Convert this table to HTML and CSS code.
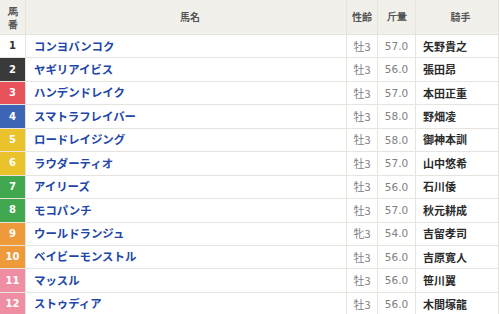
FILE: index.html
```html
<!DOCTYPE html>
<html lang="ja">
<head>
<meta charset="utf-8">
<link rel="stylesheet" href="styles.css">
</head>
<body>
<div class="table">
  <div class="row head">
    <div class="c num">馬<br>番</div>
    <div class="c name">馬名</div>
    <div class="c sex">性齢</div>
    <div class="c wt">斤量</div>
    <div class="c jk">騎手</div>
  </div>
  <div class="row"><div class="c num w1">1</div><div class="c name">コンヨバンコク</div><div class="c sex">牡3</div><div class="c wt">57.0</div><div class="c jk">矢野貴之</div></div>
  <div class="row"><div class="c num w2">2</div><div class="c name">ヤギリアイビス</div><div class="c sex">牡3</div><div class="c wt">56.0</div><div class="c jk">張田昂</div></div>
  <div class="row"><div class="c num w3">3</div><div class="c name">ハンデンドレイク</div><div class="c sex">牡3</div><div class="c wt">57.0</div><div class="c jk">本田正重</div></div>
  <div class="row"><div class="c num w4">4</div><div class="c name">スマトラフレイバー</div><div class="c sex">牡3</div><div class="c wt">58.0</div><div class="c jk">野畑凌</div></div>
  <div class="row"><div class="c num w5">5</div><div class="c name">ロードレイジング</div><div class="c sex">牡3</div><div class="c wt">58.0</div><div class="c jk">御神本訓</div></div>
  <div class="row"><div class="c num w5">6</div><div class="c name">ラウダーティオ</div><div class="c sex">牡3</div><div class="c wt">57.0</div><div class="c jk">山中悠希</div></div>
  <div class="row"><div class="c num w7">7</div><div class="c name">アイリーズ</div><div class="c sex">牡3</div><div class="c wt">56.0</div><div class="c jk">石川倭</div></div>
  <div class="row"><div class="c num w7">8</div><div class="c name">モコパンチ</div><div class="c sex">牡3</div><div class="c wt">57.0</div><div class="c jk">秋元耕成</div></div>
  <div class="row"><div class="c num w9">9</div><div class="c name">ウールドランジュ</div><div class="c sex">牝3</div><div class="c wt">54.0</div><div class="c jk">吉留孝司</div></div>
  <div class="row"><div class="c num w9">10</div><div class="c name">ベイビーモンストル</div><div class="c sex">牡3</div><div class="c wt">56.0</div><div class="c jk">吉原寛人</div></div>
  <div class="row"><div class="c num w11">11</div><div class="c name">マッスル</div><div class="c sex">牡3</div><div class="c wt">56.0</div><div class="c jk">笹川翼</div></div>
  <div class="row"><div class="c num w11">12</div><div class="c name">ストゥディア</div><div class="c sex">牡3</div><div class="c wt">56.0</div><div class="c jk">木間塚龍</div></div>
</div>
</body>
</html>
```
FILE: styles.css
```css
html, body {
  margin: 0;
  padding: 0;
  background: #fff;
}
body {
  font-family: "Noto Sans CJK JP", "Noto Sans", sans-serif;
  color: #333;
}
.table {
  width: 499px;
  display: flex;
  flex-direction: column;
}
.row {
  display: grid;
  grid-template-columns: 26px 321px 31px 38px 83px;
  height: 23.45px;
  border-bottom: 1px solid #e7e4de;
  box-sizing: border-box;
}
.row.head {
  height: 35px;
  background: #f2f0eb;
}
.c {
  display: flex;
  align-items: center;
  border-right: 1px solid #e7e4de;
  font-size: 11px;
  line-height: 1;
  white-space: nowrap;
}
.head .c {
  justify-content: center;
  font-size: 10px;
  font-weight: bold;
  color: #555;
}
.head .num {
  line-height: 13px;
  text-align: center;
  padding-top: 1px;
}
.num {
  justify-content: center;
  font-family: "DejaVu Sans", sans-serif;
  font-weight: bold;
  font-size: 10px;
  color: #fff;
}
.name {
  padding-left: 8px;
  font-weight: bold;
  font-size: 11.4px;
  color: #2146a8;
}
.sex, .wt {
  justify-content: center;
  color: #808080;
  font-size: 11px;
}
.wt {
  font-family: "DejaVu Sans", sans-serif;
  font-size: 10.5px;
}
.jk {
  padding-left: 7px;
  font-weight: bold;
  color: #2b2b2b;
}
.w1 { background: #fff; color: #333; }
.w2 { background: #3a3a3a; }
.w3 { background: #e8525b; }
.w4 { background: #3d65b6; }
.w5 { background: #e9c22c; }
.w7 { background: #41a84f; }
.w9 { background: #ef9a3a; }
.w11 { background: #ef8ea2; }
```
